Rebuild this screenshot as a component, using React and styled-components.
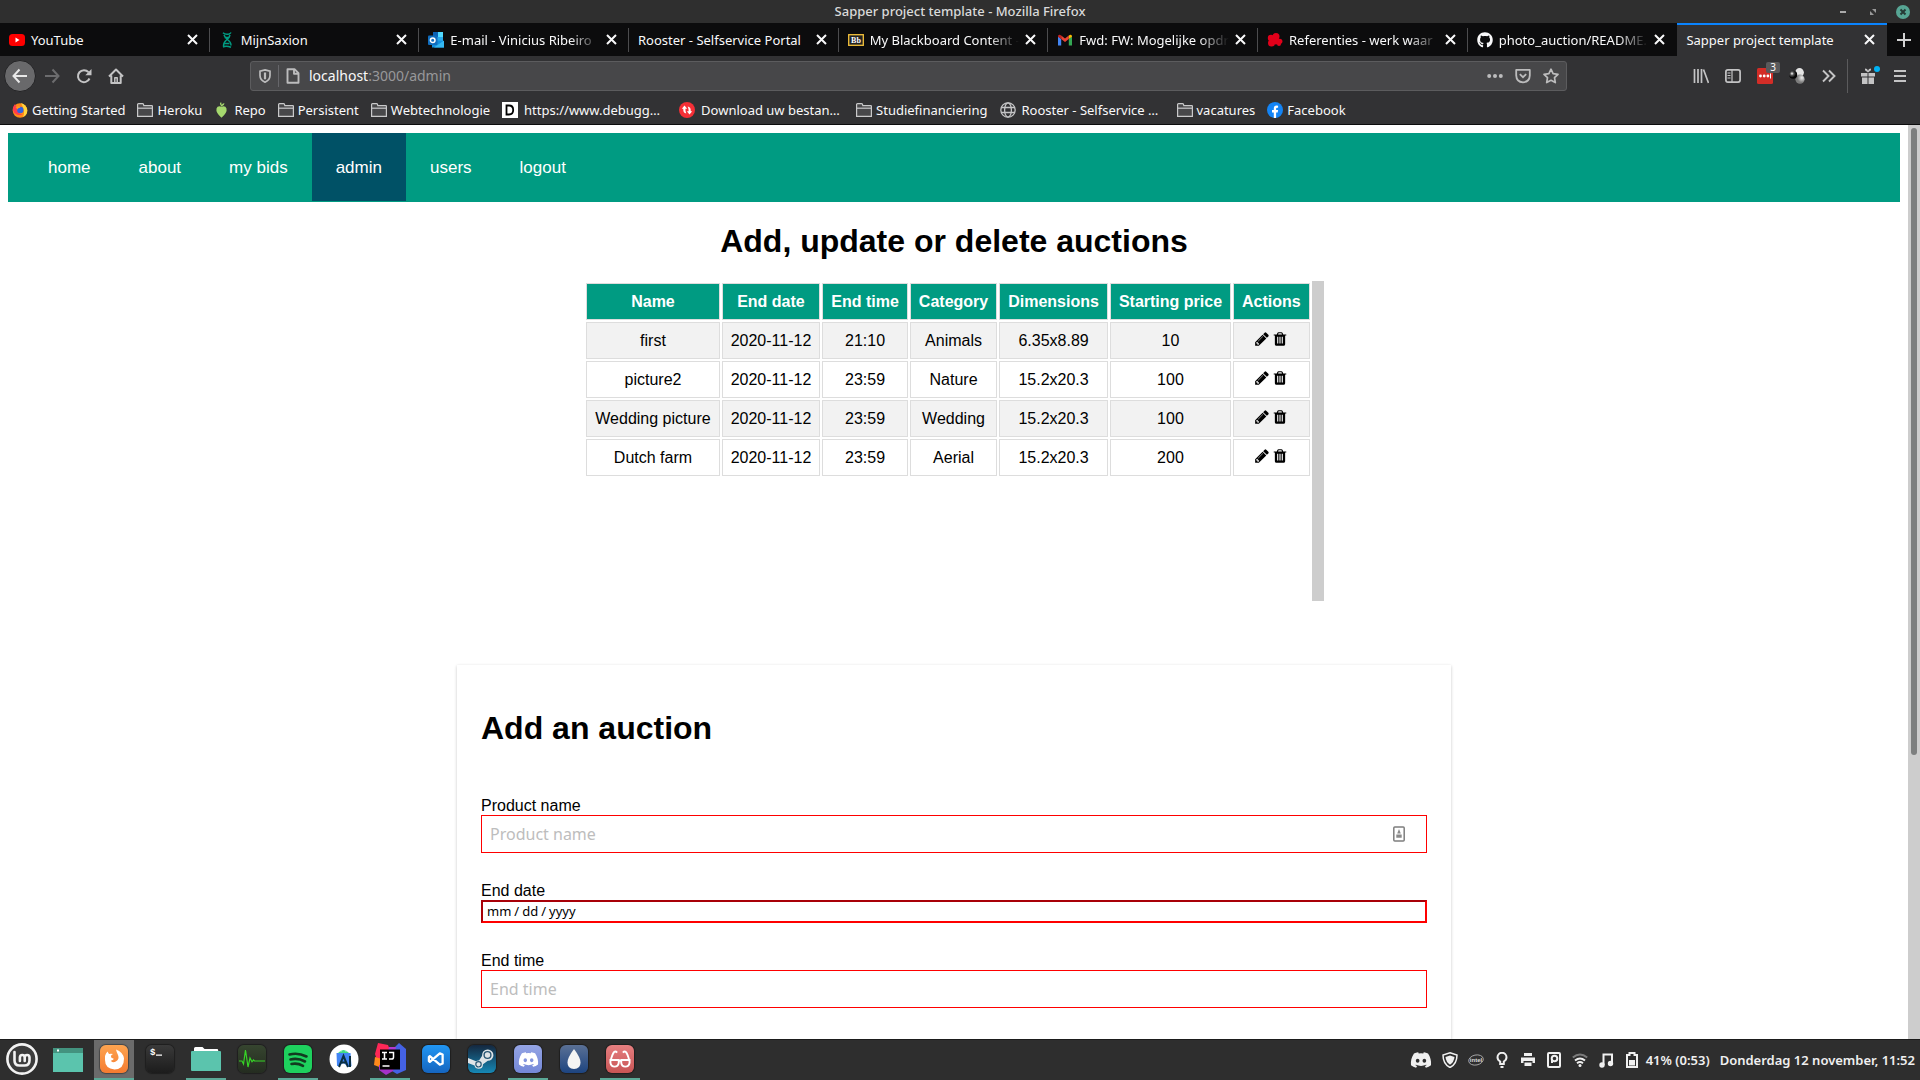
import React from "react";
import styled, { createGlobalStyle, css } from "styled-components";
import { FaGithub, FaDiscord } from "react-icons/fa";

const ui = '"Noto Sans", "Open Sans", sans-serif';
const page = '"Liberation Sans", Arial, sans-serif';
const teal = "#009b82";

const GlobalStyle = createGlobalStyle`
  * { box-sizing: border-box; }
  body { margin: 0; background: #fff; color: #000; font-family: ${page}; }
  button { padding: 0; border: 0; background: none; color: inherit; font: inherit; }
  a { color: inherit; text-decoration: none; }
  svg { display: block; flex: none; }
`;

const Desktop = styled.div`
  height: 100vh;
  display: flex;
  flex-direction: column;
  overflow: hidden;
`;

/* ---------- window title ---------- */
const TitleBar = styled.header`
  display: grid;
  grid-template-columns: 1fr auto 1fr;
  align-items: center;
  height: 23px;
  flex: none;
  background: #2f2f2f;
  color: #dadada;
  font: 500 13px/23px ${ui};
`;
const WindowButtons = styled.div`
  grid-column: 3;
  justify-self: end;
  display: flex;
  align-items: center;
  gap: 16px;
  padding-right: 10px;
`;
const WindowTitle = styled.span`
  grid-column: 2;
`;

/* ---------- tabs ---------- */
const TabStrip = styled.div`
  display: flex;
  height: 33px;
  flex: none;
  background: #0c0c0d;
  color: #f9f9fa;
  font: 13px/18px ${ui};
`;
const Tab = styled.div`
  flex: 1 1 0;
  min-width: 0;
  display: flex;
  align-items: center;
  padding: 0 10px 2px 9px;
  background: ${(p) => (p.$active ? "#323234" : "transparent")};
  border-top: 2px solid ${(p) => (p.$active ? "#0a84ff" : "transparent")};
  background-clip: padding-box;
  ${(p) => p.$divided && css`
    background: linear-gradient(#4c4c4e, #4c4c4e) right 3px / 1px 24px no-repeat;
  `}
`;
const TabLabel = styled.button`
  flex: 1;
  min-width: 0;
  display: flex;
  align-items: center;
  gap: 6px;
  white-space: nowrap;
  text-align: left;
  ${(p) => p.$fade && css`
    mask-image: linear-gradient(to left, transparent 4px, #000 34px);
  `}
`;
const CloseTab = styled.button`
  display: flex;
  width: 15px;
  justify-content: center;
`;
const NewTab = styled.button`
  display: flex;
  align-items: center;
  justify-content: center;
  width: 33px;
  color: #d2d2d3;
`;

/* ---------- toolbar ---------- */
const Toolbar = styled.div`
  display: flex;
  align-items: center;
  height: 40px;
  flex: none;
  padding: 0 4px;
  background: #323234;
  color: #c4c4c5;
`;
const ToolGroup = styled.div`
  display: flex;
  align-items: center;
  width: ${(p) => p.$width}px;
  justify-content: ${(p) => p.$justify || "flex-start"};
`;
const ToolButton = styled.button`
  position: relative;
  display: flex;
  align-items: center;
  justify-content: center;
  width: 32px;
  height: 32px;
  opacity: ${(p) => (p.$dim ? 0.4 : 1)};
`;
const BackButton = styled(ToolButton)`
  border: 1px solid #232325;
  border-radius: 50%;
  background: #69696b;
  color: #e8e8e8;
`;
const Badge = styled.span`
  position: absolute;
  top: 2px;
  right: 1px;
  width: 14px;
  border-radius: 2px;
  background: #59595b;
  color: #fff;
  font: 10px/11px ${ui};
`;
const Dot = styled.span`
  position: absolute;
  top: 6px;
  right: 4px;
  width: 6px;
  height: 6px;
  border-radius: 50%;
  background: #00b3f4;
`;
const ToolDivider = styled.span`
  width: 1px;
  height: 34px;
  margin: 0 4px 0 2px;
  background: #5b5b5d;
`;
const AddressBar = styled.div`
  flex: 1;
  display: flex;
  align-items: center;
  height: 30px;
  padding: 0 7px;
  border: 1px solid #5c5c5e;
  border-radius: 3px;
  background: #474749;
  color: #bcbcbd;
`;
const AddressDivider = styled.span`
  width: 1px;
  height: 22px;
  margin: 0 6px;
  background: #66666a;
`;
const Address = styled.a`
  flex: 1;
  margin-left: 8px;
  color: #98989a;
  font: 14px/20px ${ui};
  b { font-weight: 400; color: #f9f9fa; }
`;
const AddressActions = styled.div`
  display: flex;
  align-items: center;
  gap: 12px;
`;

/* ---------- bookmarks ---------- */
const Bookmarks = styled.nav`
  display: flex;
  align-items: center;
  height: 29px;
  flex: none;
  padding: 0 12px 1px;
  gap: 12px;
  background: #323234;
  border-bottom: 1px solid #0c0c0d;
  color: #f9f9fa;
  font: 13px/18px ${ui};
`;
const Bookmark = styled.a`
  display: flex;
  align-items: center;
  gap: ${(p) => (p.$long ? 6 : 4)}px;
  min-width: ${(p) => (p.$long ? "165px" : "0")};
  white-space: nowrap;
`;

/* ---------- web page ---------- */
const Viewport = styled.div`
  flex: 1;
  min-height: 0;
  display: flex;
  background: #fff;
`;
const PageBody = styled.div`
  flex: 1;
  min-width: 0;
  display: flex;
  flex-direction: column;
  align-items: stretch;
  padding: 8px 8px 0;
  overflow: hidden;
  font-size: 16px;
`;
const PageScroll = styled.div`
  width: 12px;
  padding: 3px;
  background: #cdcdcd;
`;
const PageThumb = styled.div`
  width: 6px;
  height: 69%;
  border-radius: 3px;
  background: #7d7f7f;
`;
const SiteNav = styled.nav`
  display: flex;
  flex: none;
  padding: 0 16px;
  background: ${teal};
  border-bottom: 1px solid ${teal};
  color: #fff;
  font-size: 17px;
  line-height: 20px;
`;
const SiteLink = styled.a`
  padding: 25px 24px 23px;
  background: ${(p) => (p.$current ? "#005166" : "transparent")};
`;
const Heading = styled.h1`
  margin: 21px 0;
  font-size: 32px;
  line-height: 37px;
  text-align: ${(p) => p.$align || "left"};
`;
const TableBox = styled.div`
  align-self: center;
  display: flex;
  align-items: flex-start;
  flex: none;
  height: 320px;
`;
const TableScroll = styled.div`
  width: 12px;
  align-self: stretch;
  background: #cdcdcd;
`;
const Auctions = styled.table`
  border-spacing: 2px;
  text-align: center;
  line-height: 19px;
  th, td { padding: 8px; border: 1px solid #ddd; white-space: nowrap; }
  th { background: ${teal}; color: #fff; }
  tbody tr:nth-child(odd) { background: #f2f2f2; }
`;
const RowActions = styled.div`
  display: flex;
  justify-content: center;
  align-items: flex-start;
  gap: 2px;
  height: 19px;
`;
const Card = styled.form`
  align-self: center;
  flex: 1;
  width: 100%;
  max-width: 994px;
  margin-top: 64px;
  padding: 24px;
  box-shadow: 0 1px 3px rgba(0, 0, 0, 0.22);
`;
const Fields = styled.div`
  display: flex;
  flex-direction: column;
  gap: 29px;
  padding-top: 29px;
`;
const Field = styled.div`
  display: flex;
  flex-direction: column;
  line-height: 18px;
`;
const inputBase = css`
  width: 100%;
  background: #fff;
  color: #000;
  outline: 0;
  border-radius: 0;
`;
const TextInput = styled.input`
  ${inputBase}
  height: 38px;
  padding: 0 8px;
  border: 1px solid #f00;
  font: 16px/22px ${ui};
  &::placeholder { color: #bdbdbd; opacity: 1; }
`;
const DateInput = styled.input`
  ${inputBase}
  height: 23px;
  padding: 0 3px 2px;
  border: 2px solid;
  border-color: #a80008 #f00 #f00 #a80008;
  font: 13px/16px ${ui};
  &::-webkit-calendar-picker-indicator { display: none; }
  &::-webkit-datetime-edit { padding: 0; }
  &::-webkit-datetime-edit-text { padding: 0 2px; }
`;
const InputWithMark = styled.div`
  position: relative;
  svg { position: absolute; right: 22px; top: 11px; }
`;

/* ---------- taskbar ---------- */
const Taskbar = styled.footer`
  display: flex;
  justify-content: space-between;
  height: 41px;
  flex: none;
  border-top: 1px solid #1b1b1b;
  background: #2e2e2e;
  color: #f0f0f0;
`;
const Launchers = styled.div`
  display: flex;
  gap: 6px;
  padding-left: 2px;
`;
const Launcher = styled.button`
  display: flex;
  align-items: center;
  justify-content: center;
  width: 40px;
  border-bottom: 2px solid ${(p) => (p.$running ? "#5ba997" : "transparent")};
  background: ${(p) => (p.$focused ? "#6b6b6b" : "transparent")};
  background-clip: padding-box;
`;
const Tile = styled.span`
  display: flex;
  align-items: center;
  justify-content: center;
  width: 28px;
  height: 28px;
  border-radius: 6px;
  background: ${(p) => p.$fill};
  color: ${(p) => p.$ink || "#fff"};
  box-shadow: 0 0 1px 1px rgba(0, 0, 0, 0.35);
  overflow: hidden;
`;
const Tray = styled.div`
  display: flex;
  align-items: center;
  gap: 10px;
  padding-right: 5px;
  font: 600 13px/18px ${ui};
`;
const Battery = styled.span`
  display: flex;
  align-items: center;
  gap: 8px;
  margin-left: 2px;
`;

/* ---------- drawings ---------- */
const Svg = ({ w = 16, h, box = "0 0 16 16", children, ...rest }) => (
  <svg width={w} height={h || w} viewBox={box} fill="none" stroke="currentColor" aria-hidden="true" {...rest}>{children}</svg>
);
const Cross = () => <Svg w={11} box="0 0 11 11" strokeWidth="2"><path d="M1 1l9 9M10 1l-9 9" /></Svg>;
const Folder = () => (
  <Svg stroke="#c9c9ca" strokeWidth="1.2"><path fill="#48484a" d="M.6 14.400V2.500q0-.9.9-.9h4q.8 0 1 .8l.3 1.200h8q.6 0 .6.7v10.100z" /><path d="M.6 6.200h14.800" /></Svg>
);
const Pencil = () => (
  <Svg box="0 0 1792 1792" fill="#000" stroke="none"><path d="M491 1536l91-91-235-235-91 91v107h128v128h107zm523-928q0-22-22-22-10 0-17 7l-542 542q-7 7-7 17 0 22 22 22 10 0 17-7l542-542q7-7 7-17zm-54-192l416 416-832 832h-416v-416zm683 96q0 53-37 90l-166 166-416-416 166-165q36-38 90-38 53 0 91 38l235 234q37 39 37 91z" /></Svg>
);
const Trash = () => (
  <Svg box="0 0 1792 1792" fill="#000" stroke="none"><path d="M704 1376v-704q0-14-9-23t-23-9h-64q-14 0-23 9t-9 23v704q0 14 9 23t23 9h64q14 0 23-9t9-23zm256 0v-704q0-14-9-23t-23-9h-64q-14 0-23 9t-9 23v704q0 14 9 23t23 9h64q14 0 23-9t9-23zm256 0v-704q0-14-9-23t-23-9h-64q-14 0-23 9t-9 23v704q0 14 9 23t23 9h64q14 0 23-9t9-23zm-544-992h448l-48-117q-7-9-17-11h-317q-10 2-17 11zm928 32v64q0 14-9 23t-23 9h-96v948q0 83-47 143.500t-113 60.500h-832q-66 0-113-58.500t-47-141.500v-952h-96q-14 0-23-9t-9-23v-64q0-14 9-23t23-9h309l70-167q15-37 54-63t79-26h320q40 0 79 26t54 63l70 167h309q14 0 23 9t9 23z" /></Svg>
);
const YoutubeMark = () => (
  <Svg stroke="none"><rect y="2" width="16" height="12" rx="3.500" fill="#f00" /><path d="M6.500 5.500v5l4-2.500z" fill="#fff" /></Svg>
);
const SaxionMark = () => (
  <Svg stroke="#009c82" strokeWidth="1.500"><path d="M4 .8q2 2 6 1.200 1.500-.6 2-1.500M5 3q1 3 4 5t3 5.500M11 3q-.6 3-3.500 5T4.500 14M5.500 5.500h5M5.500 11.500h5M4 15q3-1.800 8 .3" /></Svg>
);
const OutlookMark = () => (
  <Svg stroke="none"><path d="M5 0h10v9H5z" fill="#28a8ea" /><path d="M5 0h5v5H5z" fill="#0a62b5" /><path d="M10 0h5v5h-5z" fill="#50d9ff" /><path d="M4 8l12 1v6.500H4z" fill="#1490df" /><path d="M16 8.500v7H6z" fill="#35b8f1" /><rect y="3.500" width="9.500" height="9.500" rx="1" fill="#0f6cbd" /><circle cx="4.700" cy="8.200" r="2.300" stroke="#fff" strokeWidth="1.500" /></Svg>
);
const BlackboardMark = () => (
  <Svg stroke="none"><rect x=".7" y="2.700" width="14.600" height="10.600" fill="#222" stroke="#f5c33b" strokeWidth="1.300" /><text x="8" y="11" fill="#fff" fontSize="8" fontWeight="700" fontFamily="Liberation Serif, serif" textAnchor="middle">Bb</text></Svg>
);
const GmailMark = () => (
  <Svg box="-1 -1 16 16" stroke="none"><path d="M0 12.500V3.500l3.200 2.400v6.600z" fill="#4285f4" /><path d="M10.800 12.500V5.900L14 3.500v9z" fill="#34a853" /><path d="M3.200 2.500L7 5.400l3.800-2.900v3.600L7 9 3.200 6.100z" fill="#ea4335" /><path d="M0 3.500q0-2 1.600-1.800l1.600.8v3.600L0 3.800z" fill="#c5221f" /><path d="M14 3.500q0-2-1.600-1.800l-1.600.8v3.600L14 3.800z" fill="#fbbc04" /></Svg>
);
const RedMark = () => (
  <Svg stroke="none" fill="#e2001a"><circle cx="4" cy="6" r="3.200" /><circle cx="9" cy="4.500" r="3.500" /><circle cx="4.500" cy="11" r="3.500" /><circle cx="9" cy="9" r="3.500" /><circle cx="12.800" cy="9.300" r="2.600" /><circle cx="12" cy="12" r="2" /></Svg>
);
const FirefoxMark = () => (
  <Svg stroke="none"><circle cx="8" cy="8.500" r="7.300" fill="#ff8a16" /><path d="M9 1q6 2 6.300 7.500A7 7 0 0 1 11 15q3-5-2-14z" fill="#ffd53d" /><path d="M.8 8Q1 4 3 2l1 2h3L5.500 7q0 5 5 5.500A7.200 7.200 0 0 1 .8 8z" fill="#ff3c4d" /><circle cx="8.300" cy="8" r="3.200" fill="#2f62e0" /><path d="M3.500 5q3-2 5 .5-3 .5-3 2z" fill="#ff9a1c" /></Svg>
);
const RepoMark = () => (
  <Svg stroke="none" fill="#a5d86e"><path d="M7.500 4.500Q4.500 1 7.200.200L7.700 3Q8.500.8 10.500 1.200 10.300 4 7.500 4.500zM7.500 15.800Q1.500 10.500 2.500 6.500q1-3 5-1.800 4-1.200 5 1.800 1 4-5 9.300z" /></Svg>
);
const DebugMark = () => (
  <Svg stroke="none"><path fill="#fff" d="M0 0h16v16H0z" /><path d="M4.500 3.500h2.500q4.200 0 4.200 4.500T7 12.500H4.500z" stroke="#000" strokeWidth="1.800" /></Svg>
);
const SyncMark = () => (
  <Svg stroke="none"><circle cx="8" cy="8" r="8" fill="#f52f36" /><path d="M7.300 11.500q-3-.5-3-3.500V6.700H2.800L5.500 3.500l2.700 3.200H6.400q-.2 2.300.9 4.800zM8.700 4.500q3 .5 3 3.500v1.300h1.500l-2.700 3.200-2.700-3.200h1.800q.2-2.300-.9-4.800z" fill="#fff" /></Svg>
);
const GlobeMark = () => (
  <Svg strokeWidth="1.300" stroke="#c4c4c5"><circle cx="8" cy="8" r="7.200" /><ellipse cx="8" cy="8" rx="3.400" ry="7.200" /><path d="M1 5.500h14M1 10.500h14" /></Svg>
);
const FacebookMark = () => (
  <Svg stroke="none"><circle cx="8" cy="8" r="8" fill="#1384f5" /><path d="M6.800 16v-5.500H5V8h1.800V6.500q0-2.900 2.700-2.900l1.600.2v1.900h-1q-1 0-1 1V8h2l-.4 2.500H9.100V16z" fill="#fff" /></Svg>
);
const BallsMark = () => (
  <Svg stroke="none">
    <defs>
      <radialGradient id="dark" cx=".35" cy=".35"><stop offset="0" stopColor="#fff" /><stop offset=".45" stopColor="#555" /><stop offset="1" stopColor="#050505" /></radialGradient>
      <radialGradient id="mid" cx=".7" cy=".35"><stop offset="0" stopColor="#eee" /><stop offset="1" stopColor="#7c7c7c" /></radialGradient>
    </defs>
    <circle cx="10.500" cy="4.500" r="4.400" fill="#e4e4e4" /><circle cx="11" cy="11.200" r="4.600" fill="url(#mid)" /><circle cx="4.200" cy="6.800" r="4" fill="url(#dark)" />
  </Svg>
);

const MintMark = () => (
  <Svg w={34} box="0 0 34 34" strokeLinecap="round"><circle cx="17" cy="17" r="14.600" fill="#3c3c3c" stroke="#f2f2f2" strokeWidth="2.600" /><path d="M9.500 10v8.500q0 5 5 5h5q5 0 5-5V15.500q0-2.500-2.400-2.500t-2.400 2.500V19M19.700 15.500q0-2.500-2.400-2.500t-2.400 2.500V19" stroke="#f2f2f2" strokeWidth="2.600" /></Svg>
);
const FilesMark = ({ folder }) => folder ? (
  <Svg w={30} box="0 0 30 30" stroke="none"><path d="M3 8V4.500Q3 3 4.500 3h7l2 2H26q1.200 0 1.200 1.200V9H3z" fill="#fff" /><rect y="7" width="30" height="20" rx="1" fill="#5bc4ad" /></Svg>
) : (
  <Svg w={30} box="0 0 30 30" stroke="none"><path d="M0 4h30v24H0z" fill="#5bc4ad" /><path d="M0 4h30v5H0z" fill="#43937f" /><path d="M4 5.500h2v2H4z" fill="#fff" /></Svg>
);
const FirefoxTile = () => (
  <Svg w={23} box="0 0 23 23" stroke="none"><path d="M2 8q.8-3 2.500-4.500L6 6q2-.5 4 0-2.500 1-2 3 .4 1.400 2.500 1.500.5 1.500-2.700 2.200 2 2.600 5 .8 4-2.200 2.200-6.500Q13.500 4 13 1.500 20 4 21 10.500 21.200 21 11.500 21.500 2 20.500 2 12z" fill="#fff" /></Svg>
);
const TerminalTile = () => (
  <Svg w={28} box="0 0 28 28" stroke="none"><text x="4" y="10" fill="#fff" fontSize="9" fontWeight="700" fontFamily="Liberation Mono, monospace">$</text><path d="M10 9.500h6v1.200h-6z" fill="#fff" /></Svg>
);
const PulseTile = () => <Svg w={28} box="0 0 28 28" stroke="#36d426" strokeWidth="1.200"><path d="M1 16h3l1.500 3 2-14 2.500 17 2-9 2 3.800 1.500-1.800 1 1H27" /></Svg>;
const SpotifyTile = () => <Svg w={22} box="0 0 22 22" strokeWidth="2.600" strokeLinecap="round"><path d="M2.500 6.500q8.500-2.300 17 2M3.500 11.500q7.500-1.800 14.500 2M4.500 16q6-1.300 11.500 1.800" /></Svg>;
const StudioMark = () => (
  <Svg w={30} box="0 0 30 30" stroke="none"><circle cx="15" cy="15" r="14.500" fill="#fff" /><path d="M9 9q5.500-6 11 0z" fill="#3ddc84" /><path d="M7.500 9h14l1 13-3 1-5-4-5 3H8z" fill="#4285f4" /><path d="M10 23l4.500-11L19 23M12 18.500h5M21 12v11" stroke="#0b3042" strokeWidth="2" /><circle cx="12" cy="7" r=".6" fill="#fff" /><circle cx="17" cy="7" r=".6" fill="#fff" /></Svg>
);
const IdeaMark = () => (
  <Svg w={32} box="0 0 32 32" stroke="none"><path d="M4 0l10 2 4 10-14 8-3-9z" fill="#fe2857" /><path d="M1 14l7 2v9l-8-3z" fill="#ff8a1c" /><path d="M18 7l7-7 7 6v21l-9 4-10-6z" fill="#4462e4" /><path d="M5 22h16l-2 6-7 4-7-5z" fill="#a432c8" /><path d="M15 4l7 0-4 22-8-4z" fill="#b03ad0" /><path d="M6 6.500h20v20H6z" fill="#000" /><path d="M8 9.500h5M8 16h5M10.500 9v7M15 9.500h4.500v4.700q0 1.800-2 1.800H15M8.500 23h7" stroke="#fff" strokeWidth="1.500" /></Svg>
);
const CodeTile = () => <Svg w={18} box="0 0 19 19" strokeWidth="2.400" strokeLinejoin="round"><path d="M13.500 3.500L3 12.500 2 11.500v-4l1-1 10.500 9 3-1.300V4.800z" /></Svg>;
const SteamTile = () => (
  <Svg w={28} box="0 0 28 28" stroke="none"><path d="M0 13l8 3.300q1.500-1 3-.7l3-4.600q0-6.500 5.800-6.500a5.600 5.600 0 0 1 0 11.300l-4.800 3.400q0 4.500-4.300 4.500-3.500 0-4.200-3.300L0 18z" fill="#dfe4e7" /><circle cx="19.500" cy="10" r="3.400" stroke="#2b5874" strokeWidth="1.400" /><circle cx="10.500" cy="19.300" r="2.700" stroke="#2b5874" strokeWidth="1.200" /></Svg>
);
const DropTile = () => <Svg w={22} box="0 0 22 22" stroke="none"><path d="M11 1q6.500 8.500 6.500 13.500 0 6.500-6.500 6.500t-6.500-6.500Q4.500 9.500 11 1z" fill="#f4f4f4" /></Svg>;
const GlassesTile = () => <Svg w={22} box="0 0 23 23" strokeWidth="2"><path d="M1.500 12.500h8.700v3q-.7 4-4.300 4t-4.400-4zM12.800 12.500h8.700v3q-.7 4-4.400 4t-4.300-4z" /><path d="M10 13.500h3M1.800 13Q3.500 6 5.500 4q1.500-.8 3 .8M21.200 13Q19.500 6 17.500 4q-1.500-.8-3 .8" /></Svg>;

/* ---------- data ---------- */
const tabs = [
  { icon: <YoutubeMark />, text: "YouTube" },
  { icon: <SaxionMark />, text: "MijnSaxion" },
  { icon: <OutlookMark />, text: "E-mail - Vinicius Ribeiro", fade: true },
  { text: "Rooster - Selfservice Portal" },
  { icon: <BlackboardMark />, text: "My Blackboard Content –", fade: true },
  { icon: <GmailMark />, text: "Fwd: FW: Mogelijke opdr", fade: true },
  { icon: <RedMark />, text: "Referenties - werk waar", fade: true },
  { icon: <FaGithub size={16} />, text: "photo_auction/README.", fade: true },
  { text: "Sapper project template", active: true },
];
const bookmarks = [
  { icon: <FirefoxMark />, text: "Getting Started" },
  { icon: <Folder />, text: "Heroku" },
  { icon: <RepoMark />, text: "Repo" },
  { icon: <Folder />, text: "Persistent" },
  { icon: <Folder />, text: "Webtechnologie" },
  { icon: <DebugMark />, text: "https://www.debugg…", long: true },
  { icon: <SyncMark />, text: "Download uw bestan…", long: true },
  { icon: <Folder />, text: "Studiefinanciering" },
  { icon: <GlobeMark />, text: "Rooster - Selfservice …", long: true },
  { icon: <Folder />, text: "vacatures" },
  { icon: <FacebookMark />, text: "Facebook" },
];
const links = ["home", "about", "my bids", "admin", "users", "logout"];
const columns = ["Name", "End date", "End time", "Category", "Dimensions", "Starting price", "Actions"];
const auctions = [
  ["first", "2020-11-12", "21:10", "Animals", "6.35x8.89", "10"],
  ["picture2", "2020-11-12", "23:59", "Nature", "15.2x20.3", "100"],
  ["Wedding picture", "2020-11-12", "23:59", "Wedding", "15.2x20.3", "100"],
  ["Dutch farm", "2020-11-12", "23:59", "Aerial", "15.2x20.3", "200"],
];
const launchers = [
  { name: "Menu", art: <MintMark /> },
  { name: "Show desktop", art: <FilesMark /> },
  { name: "Firefox", running: true, focused: true, art: <Tile $fill="linear-gradient(#fda450,#f57b30)"><FirefoxTile /></Tile> },
  { name: "Terminal", art: <Tile $fill="linear-gradient(#3a3a3a,#1c1c1c)"><TerminalTile /></Tile> },
  { name: "Files", running: true, art: <FilesMark folder /> },
  { name: "System monitor", art: <Tile $fill="linear-gradient(#36452f,#242c20)"><PulseTile /></Tile> },
  { name: "Spotify", running: true, art: <Tile $fill="#1ed15e" $ink="#123a20"><SpotifyTile /></Tile> },
  { name: "Android Studio", art: <StudioMark /> },
  { name: "IntelliJ IDEA", running: true, art: <IdeaMark /> },
  { name: "Visual Studio Code", art: <Tile $fill="linear-gradient(#2196f3,#1565c0)"><CodeTile /></Tile> },
  { name: "Steam", art: <Tile $fill="linear-gradient(#14273f,#1688b5)"><SteamTile /></Tile> },
  { name: "Discord", running: true, art: <Tile $fill="linear-gradient(#94a4e4,#7488d8)"><FaDiscord size={21} /></Tile> },
  { name: "Deluge", art: <Tile $fill="linear-gradient(#5a7095,#1d4480)"><DropTile /></Tile> },
  { name: "Reader", running: true, art: <Tile $fill="linear-gradient(#e67f80,#c85555)"><GlassesTile /></Tile> },
];

export default function App() {
  return (
    <Desktop>
      <GlobalStyle />
      <TitleBar>
        <WindowTitle>Sapper project template - Mozilla Firefox</WindowTitle>
        <WindowButtons>
          <button aria-label="Minimize"><Svg w={14} box="0 0 14 14" stroke="#aaa" strokeWidth="2"><path d="M4 7h6" /></Svg></button>
          <button aria-label="Restore"><Svg w={14} box="0 0 14 14" fill="#999" stroke="none"><path d="M6 4h4v4zM4 6v4h4z" /></Svg></button>
          <button aria-label="Close"><Svg w={14} box="0 0 14 14" stroke="#263a35" strokeWidth="2"><circle cx="7" cy="7" r="7" fill="#57a594" stroke="none" /><path d="M4.500 4.500l5 5M9.500 4.500l-5 5" /></Svg></button>
        </WindowButtons>
      </TitleBar>

      <TabStrip>
        {tabs.map((t, i) => (
          <Tab key={t.text} $active={t.active} $divided={i < tabs.length - 2}>
            <TabLabel $fade={t.fade}>{t.icon}<span>{t.text}</span></TabLabel>
            <CloseTab aria-label={`Close ${t.text}`}><Cross /></CloseTab>
          </Tab>
        ))}
        <NewTab aria-label="New tab"><Svg w={14} box="0 0 14 14" strokeWidth="2"><path d="M7 0v14M0 7h14" /></Svg></NewTab>
      </TabStrip>

      <Toolbar>
        <ToolGroup $width={246}>
          <BackButton aria-label="Back"><Svg strokeWidth="2"><path d="M15 8H1.500M7.500 1.500L1.500 8l6 6.500" /></Svg></BackButton>
          <ToolButton aria-label="Forward" $dim><Svg strokeWidth="2"><path d="M1 8h13.500M8.500 1.500l6 6.500-6 6.500" /></Svg></ToolButton>
          <ToolButton aria-label="Reload"><Svg strokeWidth="2"><path d="M13.500 10.500A6 6 0 1 1 12.500 4.200" /><path d="M15.500 1v6.200H9.300z" fill="currentColor" stroke="none" /></Svg></ToolButton>
          <ToolButton aria-label="Home"><Svg strokeWidth="2" strokeLinejoin="round"><path d="M1 8.500l7-7 7 7M3.300 7.500V15h9.400V7.500" /><path d="M6.800 15V9.800h2.400V15" strokeWidth="1.500" /></Svg></ToolButton>
        </ToolGroup>
        <AddressBar>
          <Svg w={14} box="0 0 14 14" strokeWidth="1.700"><path d="M7 .9l5 1.200v4.400Q12 11 7 13.200 2 11 2 6.500V2.100z" /><path d="M7 3.500v6.800" strokeWidth="2.200" /></Svg>
          <AddressDivider />
          <Svg strokeWidth="1.900"><path d="M2.500 1.200h7l4 4v9.600h-11zM9 1.500v4.200h4.300" strokeLinejoin="round" /></Svg>
          <Address href="#admin"><b>localhost</b>:3000/admin</Address>
          <AddressActions>
            <Svg fill="currentColor" stroke="none"><circle cx="2.200" cy="8" r="2" /><circle cx="8" cy="8" r="2" /><circle cx="13.800" cy="8" r="2" /></Svg>
            <Svg strokeWidth="1.800"><path d="M1.200 1.900h13.600v5.500Q14.500 14 8 14.300 1.500 14 1.200 7.400z" strokeLinejoin="round" /><path d="M4.800 6.200L8 9.200l3.200-3" /></Svg>
            <Svg strokeWidth="1.700" strokeLinejoin="round"><path d="M8 1.200l2.100 4.400 4.900.7-3.500 3.400.8 4.900L8 12.300l-4.300 2.300.8-4.900L1 6.300l4.900-.7z" /></Svg>
          </AddressActions>
        </AddressBar>
        <ToolGroup $width={349} $justify="flex-end">
          <ToolButton aria-label="Library"><Svg strokeWidth="1.700"><path d="M1.500 1v14M5 1v14M8.500 1v14M10.500 1.500l5 13.500" /></Svg></ToolButton>
          <ToolButton aria-label="Sidebar"><Svg strokeWidth="1.700"><rect x=".9" y="1.900" width="14.200" height="12.200" rx="2" /><path d="M7 2v12M2.500 5h3M2.500 7.500h3M2.500 10h3" strokeWidth="1.200" /></Svg></ToolButton>
          <ToolButton aria-label="Password manager">
            <Svg stroke="none"><rect width="16" height="16" rx="1.500" fill="#d32d27" /><circle cx="3.500" cy="8" r="1.400" fill="#fff" /><circle cx="7.200" cy="8" r="1.400" fill="#fff" /><circle cx="10.900" cy="8" r="1.400" fill="#fff" /><path d="M13 5.500h1v5h-1z" fill="#fff" /></Svg>
            <Badge>3</Badge>
          </ToolButton>
          <ToolButton aria-label="Extension"><BallsMark /></ToolButton>
          <ToolButton aria-label="More tools"><Svg strokeWidth="1.900"><path d="M2 2.500L7.500 8 2 13.500M8 2.500L13.500 8 8 13.500" /></Svg></ToolButton>
          <ToolDivider />
          <ToolButton aria-label="What's new"><Svg fill="currentColor" stroke="none"><path d="M1 5h6.500v3.500H1zM8.500 5H15v3.500H8.500zM2 9.500h5.500V16H2zM8.500 9.500H14V16H8.500zM5 .5q2.500 0 3 2.200Q8.500.5 11 .5v1.700L8 4.500 5 2.200z" /></Svg><Dot /></ToolButton>
          <ToolButton aria-label="Menu"><Svg w={12} h={16} box="0 0 12 16" strokeWidth="2"><path d="M0 3h12M0 8h12M0 13h12" /></Svg></ToolButton>
        </ToolGroup>
      </Toolbar>

      <Bookmarks aria-label="Bookmarks">
        {bookmarks.map((b) => (
          <Bookmark key={b.text} href="#bookmark" $long={b.long}>
            {b.icon}<span>{b.text}</span>
          </Bookmark>
        ))}
      </Bookmarks>

      <Viewport>
        <PageBody>
          <SiteNav>
            {links.map((l) => <SiteLink key={l} href={`#${l}`} $current={l === "admin"}>{l}</SiteLink>)}
          </SiteNav>
          <Heading $align="center">Add, update or delete auctions</Heading>
          <TableBox>
            <Auctions>
              <thead><tr>{columns.map((c) => <th key={c}>{c}</th>)}</tr></thead>
              <tbody>
                {auctions.map((row) => (
                  <tr key={row[0]}>
                    {row.map((v, i) => <td key={i}>{v}</td>)}
                    <td>
                      <RowActions>
                        <button aria-label={`Edit ${row[0]}`}><Pencil /></button>
                        <button aria-label={`Delete ${row[0]}`}><Trash /></button>
                      </RowActions>
                    </td>
                  </tr>
                ))}
              </tbody>
            </Auctions>
            <TableScroll />
          </TableBox>
          <Card>
            <Heading>Add an auction</Heading>
            <Fields>
              <Field>
                <label htmlFor="product">Product name</label>
                <InputWithMark>
                  <TextInput id="product" placeholder="Product name" />
                  <Svg w={12} h={16} box="0 0 12 16" stroke="#7e7e7e" strokeWidth="1.500"><rect x=".8" y="1" width="10.400" height="14" rx="1" /><path d="M6 3l1.800 4.500H4.200zM3.300 8.500h5.400v3.200H3.300z" fill="#8a8a8a" stroke="none" /></Svg>
                </InputWithMark>
              </Field>
              <Field>
                <label htmlFor="date">End date</label>
                <DateInput id="date" type="date" />
              </Field>
              <Field>
                <label htmlFor="time">End time</label>
                <TextInput id="time" placeholder="End time" />
              </Field>
            </Fields>
          </Card>
        </PageBody>
        <PageScroll><PageThumb /></PageScroll>
      </Viewport>

      <Taskbar>
        <Launchers>
          {launchers.map((l) => <Launcher key={l.name} aria-label={l.name} $running={l.running} $focused={l.focused}>{l.art}</Launcher>)}
        </Launchers>
        <Tray>
          <FaDiscord size={22} />
          <Svg strokeWidth="1.500"><path d="M8 .8l7 2.200q0 9-7 12.500Q1 12 1 3z" /><path d="M8 3.500l4.500 1.400Q12 10 8 12.800 4 10 3.500 4.900z" fill="currentColor" stroke="none" /></Svg>
          <Svg><ellipse cx="8" cy="8" rx="7.400" ry="5" transform="rotate(-12 8 8)" strokeWidth=".9" stroke="#aaa" /><text x="8" y="10" fill="#ddd" stroke="none" fontSize="6" fontFamily="Liberation Sans, sans-serif" textAnchor="middle">intel</text></Svg>
          <Svg strokeWidth="2"><path d="M6.200 12V9.500Q3.500 8 3.500 5.300a4.500 4.500 0 0 1 9 0Q12.500 8 9.800 9.500V12zM6.500 15h3" /></Svg>
          <Svg stroke="none" fill="currentColor"><path d="M4 1h8v3H4zM1 5.500h14V11h-2.500V9h-9v2H1zM4.500 10.500h7V14h-7z" /></Svg>
          <Svg strokeWidth="2"><rect x="2" y="1" width="12" height="14" rx="1" /><circle cx="8.500" cy="6.500" r="2.800" /><path d="M6 7v4" /></Svg>
          <Svg strokeWidth="2"><path d="M.8 5.500q7.200-6 14.400 0" opacity=".4" /><path d="M3 8.500q5-4 10 0M5 11.200q3-2.300 6 0" /><circle cx="8" cy="13.500" r="1.500" fill="currentColor" stroke="none" /></Svg>
          <Svg strokeWidth="2"><path d="M5.500 13V2.500H14V11" /><circle cx="4" cy="13" r="1.700" fill="currentColor" /><circle cx="12.500" cy="11.500" r="1.700" fill="currentColor" /></Svg>
          <Battery>
            <Svg w={12} h={16} box="0 0 12 16" strokeWidth="2"><path d="M1 3h2.500V1h5v2H11v12H1z" /><path d="M3 8h6v5.500H3z" fill="currentColor" stroke="none" /></Svg>
            41% (0:53)
          </Battery>
          <time>Donderdag 12 november, 11:52</time>
        </Tray>
      </Taskbar>
    </Desktop>
  );
}
